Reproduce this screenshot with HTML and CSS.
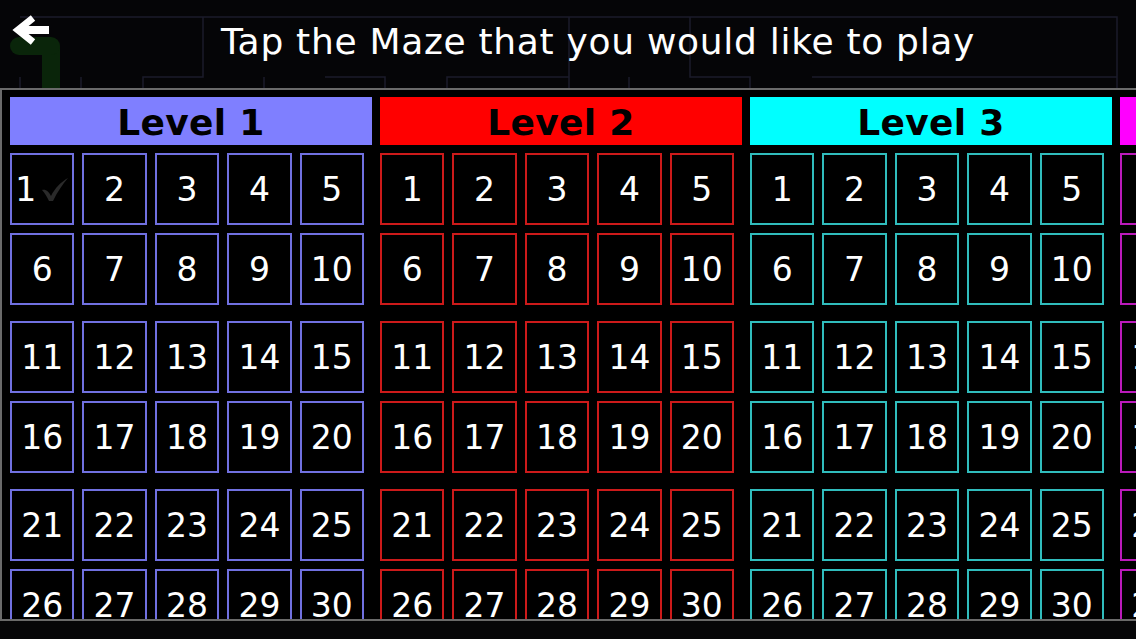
FILE: index.html
```html
<!DOCTYPE html>
<html>
<head>
<meta charset="utf-8">
<link rel="stylesheet" href="styles.css">
</head>
<body>
<div class="screen">
  <header class="top">
    <svg class="maze" width="1136" height="88" viewBox="0 0 1136 88">
      <path d="M51 46 L51 88" stroke="#0a250a" stroke-width="18" fill="none"/>
      <path d="M19 46 L51 46" stroke="#0a250a" stroke-width="18" stroke-linecap="round" fill="none"/>
      <g stroke="#1b1b2b" stroke-width="1.5" fill="none">
        <path d="M20 17 H1117 V88"/>
        <path d="M203 17 V77 H143 V88"/>
        <path d="M20 77 V88"/>
        <path d="M81 77 V88"/>
        <path d="M264 77 V88"/>
        <path d="M325 77 H385 V88"/>
        <path d="M447 88 V77 H569"/>
        <path d="M569 17 V88"/>
        <path d="M629 77 V88"/>
        <path d="M690 17 V77 H750 V88"/>
        <path d="M812 77 H1117"/>
      </g>
    </svg>
    <button class="back" aria-label="Back">
      <svg width="40" height="34" viewBox="0 0 40 34">
        <path d="M22 4 L7 16 L22 28" stroke="#fff" stroke-width="7" fill="none" stroke-linejoin="miter"/>
        <path d="M10 16 H38" stroke="#fff" stroke-width="8" fill="none"/>
      </svg>
    </button>
    <h1 class="title">Tap the Maze that you would like to play</h1>
  </header>
  <main class="panel">
    <section class="level lv1">
      <h2 class="level-head">Level 1</h2>
      <div class="groups"></div>
    </section>
    <section class="level lv2">
      <h2 class="level-head">Level 2</h2>
      <div class="groups"></div>
    </section>
    <section class="level lv3">
      <h2 class="level-head">Level 3</h2>
      <div class="groups"></div>
    </section>
    <section class="level lv4">
      <h2 class="level-head">Level 4</h2>
      <div class="groups"></div>
    </section>
  </main>
  <div class="bottom"></div>
</div>
<script src="app.js"></script>
</body>
</html>
```
FILE: styles.css
```css
* { box-sizing: border-box; }
html, body { margin: 0; padding: 0; }
body {
  background: #050507;
  width: 1136px;
  height: 639px;
  overflow: hidden;
  font-family: "DejaVu Sans", Verdana, sans-serif;
  color: #fff;
}
.screen { width: 1136px; height: 639px; display: flex; flex-direction: column; }
.top {
  position: relative;
  height: 88px;
  flex: 0 0 88px;
  display: flex;
  align-items: flex-start;
}
.maze { position: absolute; left: 0; top: 0; }
.back {
  position: relative;
  margin: 14px 0 0 11px;
  padding: 0;
  border: 0;
  background: none;
  width: 40px;
  height: 34px;
  display: block;
}
.back svg { display: block; }
.title {
  position: relative;
  flex: 1;
  margin: 0;
  padding: 18px 0 0 0;
  margin-left: -51px;
  padding-left: 60px;
  text-align: center;
  font-weight: normal;
  font-size: 36px;
  line-height: 48px;
  letter-spacing: 0.7px;
  white-space: nowrap;
}
.panel {
  flex: 0 0 533px;
  height: 533px;
  background: #000;
  border-top: 2px solid #6a6a6a;
  border-left: 2px solid #6a6a6a;
  border-bottom: 2px solid #6a6a6a;
  padding: 7px 0 0 8px;
  display: flex;
  gap: 8px;
  overflow: hidden;
}
.level { flex: 0 0 362px; display: flex; flex-direction: column; }
.level-head {
  flex: 0 0 48px;
  margin: 0 0 8px 0;
  height: 48px;
  padding-top: 2px;
  line-height: 48px;
  text-align: center;
  font-size: 36px;
  font-weight: bold;
  color: #000;
  letter-spacing: 0.3px;
  overflow: hidden;
}
.groups { flex: 0 0 auto; width: 354px; display: flex; flex-direction: column; gap: 16px; }
.group {
  flex: 0 0 auto;
  display: grid;
  grid-template-columns: repeat(5, 1fr);
  grid-auto-rows: 72px;
  column-gap: 8px;
  row-gap: 8px;
}
.cell {
  border: 2px solid;
  display: flex;
  align-items: center;
  justify-content: center;
  font-size: 33px;
  color: #fff;
  background: #000;
  padding-top: 1px;
  white-space: nowrap;
}
.cell .check { margin-left: 5px; display: block; }
.lv1 .level-head { background: #7f7fff; }
.lv1 .cell { border-color: #7070e0; }
.lv2 .level-head { background: #ff0000; }
.lv2 .cell { border-color: #cc1a1a; }
.lv3 .level-head { background: #00ffff; }
.lv3 .cell { border-color: #30bcbc; }
.lv4 .level-head { background: #ff00ff; }
.lv4 .cell { border-color: #bb1abb; }
.bottom { flex: 1; background: #060608; }
```
FILE: app.js
```js
document.querySelectorAll('.groups').forEach(function (g, li) {
  for (var gi = 0; gi < 3; gi++) {
    var grp = document.createElement('div');
    grp.className = 'group';
    for (var i = 1; i <= 10; i++) {
      var n = gi * 10 + i;
      var c = document.createElement('div');
      c.className = 'cell';
      c.textContent = n;
      if (li === 0 && n === 1) {
        var ns = 'http://www.w3.org/2000/svg';
        var s = document.createElementNS(ns, 'svg');
        s.setAttribute('class', 'check');
        s.setAttribute('width', '28');
        s.setAttribute('height', '24');
        s.setAttribute('viewBox', '0 0 28 24');
        var p = document.createElementNS(ns, 'path');
        p.setAttribute('d', 'M1 12 C5 11 8 14 10 18 C14 10 20 4 27 0 C22 6 16 14 12 23 L8 23 C6 19 4 15 1 12 Z');
        p.setAttribute('fill', '#2a2a2a');
        s.appendChild(p);
        c.appendChild(s);
      }
      grp.appendChild(c);
    }
    g.appendChild(grp);
  }
});
```
